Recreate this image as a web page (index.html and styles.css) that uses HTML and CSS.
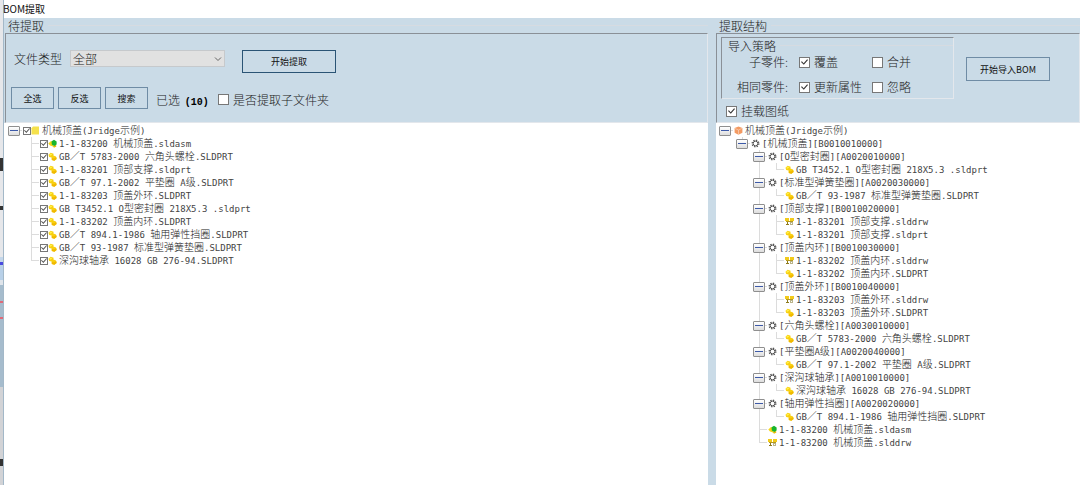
FILE: index.html
```html
<!DOCTYPE html>
<html lang="zh-CN">
<head>
	<meta charset="UTF-8">
	<title>BOM提取</title>
	<link rel="stylesheet" href="styles.css">
	<script src="tree.js"></script>
</head>
<body>
	<svg class="sprite" aria-hidden="true">
		<symbol id="part" viewBox="0 0 9 9">
			<path d="M.5 2.8 2.6.8 5.6 1.8 5.4 3.6 8 4.6 8.6 7 6.4 8.7 3.8 8 3.6 5.6 1.2 5z" fill="#f8cf10"/>
			<path d="M1 3 2.8 1.4 4.4 2.2 2.6 3.8z" fill="#fff04a"/>
			<path d="M3.8 6 6 6.6 8.2 5 8.6 7 6.4 8.7 3.8 8z" fill="#f0b800"/>
		</symbol>
		<symbol id="asm" viewBox="0 0 9 9">
			<path d="M.3 4.4 3 2 5 3 5 7.4 2 6.6z" fill="#f5d516"/>
			<path d="M4.6 6.8 8 6 8.4 7.6 6 8.8z" fill="#e8b800"/>
			<path d="M3.6 2.2 6 .8 8.6 2.4 8.6 5.6 6.2 7 3.8 5.4z" fill="#17b52c"/>
		</symbol>
		<symbol id="drw" viewBox="0 0 9 9">
			<path d="M0 1h4v3H0zM5 1h4v3H5z" fill="#f2cb1c"/>
			<path d="M1 4h7v1H1z" fill="#b59a20"/>
			<path d="M2 5h1v2H2zM1 7h3v1H1z" fill="#8d7a1e"/>
			<path d="M5 5h3v3H5z" fill="#b9b389"/>
			<path d="M6 6h1v1H6z" fill="#fff"/>
		</symbol>
		<symbol id="folder" viewBox="0 0 9 9">
			<path d="M.5 2.2 2 .6h6v7.8H.5z" fill="#f5e14c"/>
		</symbol>
		<symbol id="cube" viewBox="0 0 9 9">
			<path d="M4.5.4 8.4 2v4.8L4.5 8.8.6 6.8V2z" fill="#f39a62"/>
			<path d="M.8 2.4 4.5 4 8.2 2.4M4.5 4v4.6" fill="none" stroke="#fbd3b8" stroke-width=".7"/>
		</symbol>
		<symbol id="gear" viewBox="0 0 9 9">
			<circle cx="4.5" cy="4.5" r="3.2" fill="none" stroke="#555" stroke-width="1.6" stroke-dasharray="1.3 1.213"/>
			<circle cx="4.5" cy="4.5" r="2.3" fill="#fff" stroke="#555"/>
		</symbol>
	</svg>

	<div class="window">
		<div class="behind"></div>
		<h1 class="title">BOM提取</h1>
		<main class="main">
			<section class="group source">
				<h2 class="legend">待提取</h2>
				<div class="panel">
					<div class="row first">
						<label for="type">文件类型</label>
						<div class="combo">
							<select id="type"><option>全部</option></select>
							<svg viewBox="0 0 8 8"><path d="M1 2.5 4 5.5 7 2.5" fill="none" stroke="#666"/></svg>
						</div>
						<button class="btn primary">开始提取</button>
					</div>
					<div class="row second">
						<button class="btn small">全选</button>
						<button class="btn small">反选</button>
						<button class="btn small">搜索</button>
						<span class="count">已选 <b>(10)</b></span>
						<label class="check"><input type="checkbox">是否提取子文件夹</label>
					</div>
				</div>
				<ul class="tree" id="files"></ul>
			</section>

			<section class="group target">
				<h2 class="legend">提取结构</h2>
				<div class="panel">
					<div class="options">
						<div class="policy">
							<h3 class="legend">导入策略</h3>
							<div class="grid">
								<span class="name">子零件:</span>
								<label class="check"><input type="checkbox" checked>覆盖</label>
								<label class="check"><input type="checkbox">合并</label>
								<span class="name">相同零件:</span>
								<label class="check"><input type="checkbox" checked>更新属性</label>
								<label class="check"><input type="checkbox">忽略</label>
							</div>
						</div>
						<label class="check mount"><input type="checkbox" checked>挂载图纸</label>
					</div>
					<button class="btn import">开始导入BOM</button>
				</div>
				<ul class="tree" id="bom"></ul>
			</section>
		</main>
	</div>
</body>
</html>
```
FILE: styles.css
```css
*{box-sizing:border-box;}
body{margin:0;background:#fff;color:#222;font:12px/16px "Noto Sans CJK SC",sans-serif;font-weight:300;}
h1,h2,h3,ul{margin:0;padding:0;font-weight:300;list-style:none;}
.sprite{display:none;}

.window{display:grid;grid-template-columns:4px 1fr;grid-template-rows:18px 1fr;min-height:100vh;}
/* 窗口左侧露出的底层窗口 */
.behind{grid-row:1 / 3;border-right:1px solid #a3b8c8;background:linear-gradient(#e6e7ea 158px,#333 158px,#333 171px,#e6e7ea 171px,#e6e7ea 206px,#333 206px,#333 210px,#e6e7ea 210px,#e6e7ea 257px,#c3d6ea 257px,#c3d6ea 262px,#4a4ae0 262px,#4a4ae0 265px,#b8d0e8 265px,#b8d0e8 280px,#dfe4ea 280px,#dfe4ea 285px,#a6bccd 285px,#a6bccd 301px,#e06a78 301px,#e06a78 303px,#a6bccd 303px,#a6bccd 317px,#e06a78 317px,#e06a78 319px,#a6bccd 319px,#a6bccd 387px,#d2d3d6 387px,#d2d3d6 459px,#333 459px,#333 466px,#d2d3d6 466px);}
.title{margin-left:-1px;font-size:10px;line-height:18px;color:#111;font-weight:400;}
.main{display:grid;grid-template-columns:704px 1fr;gap:8px;background:#cadbe7;}

/* 分组框 */
.group{display:flex;flex-direction:column;min-width:0;}
.legend{display:flex;align-items:center;gap:4px;padding-left:4px;height:15px;font-size:12px;line-height:12px;}
.legend::after{content:"";flex:1;height:1px;background:#d6dbe1;}
.panel{height:90px;border:1px solid #8a9097;border-right-color:#e3e7ec;border-bottom-color:#e3e7ec;}
.source .panel{margin-left:1px;}
.row{display:flex;align-items:center;}
.first{padding:16px 0 0 8px;}
.first label{width:56px;margin-top:-6px;}
.second{padding:14px 0 0 5px;gap:4px;}
.second span,.second label{margin-top:3px;}

.combo{position:relative;width:155px;margin:-6px 17px 0 0;}
.combo select{display:block;appearance:none;width:100%;height:17px;padding:0 2px;border:1px solid #c6c9cc;border-radius:0;background:#e1e1e1;color:#222;font:inherit;line-height:15px;}
.combo svg{position:absolute;right:3px;top:5px;width:8px;height:8px;pointer-events:none;}

.btn{height:23px;padding:0;border:1px solid #6f8ca5;background:transparent;color:#111;font-family:inherit;font-size:9px;font-weight:400;}
.small{width:43px;height:22px;}
.primary{width:94px;border-color:#2a5475;}
.import{width:84px;height:24px;margin:23px 0 0 12px;}
.count{margin-left:4px;width:58px;}
.count b{margin-left:2px;font:bold 10px "Liberation Mono",monospace;color:#000;}

.check{display:flex;align-items:center;gap:4px;white-space:nowrap;}
input{position:relative;appearance:none;flex:none;margin:0;width:11px;height:11px;border:1px solid #777;background:#fff;}
input:checked::after{content:"";position:absolute;left:1px;top:1px;width:7px;height:7px;background:#333;clip-path:polygon(0 50%,12% 40%,38% 68%,88% 12%,100% 22%,40% 90%);}

/* 导入选项 */
.target .legend{padding-left:3px;}
.target .panel{display:flex;align-items:flex-start;}
.options{padding:3px 0 0 4px;}
.policy{width:233px;height:62px;border:1px solid #8a9097;border-right-color:#e3e7ec;border-bottom-color:#e3e7ec;}
.target .policy .legend{padding-left:6px;}
.grid{display:grid;grid-template-columns:70px 73px 1fr;row-gap:9px;padding-top:1px;}
.name{padding-right:4px;text-align:right;}
.grid .check{padding-left:7px;}
.mount{margin:4px 0 0 5px;}

/* 树 */
.tree{flex:1;padding:1px 0 0 4px;background:#fff;color:#444;font:9px/13px "DejaVu Sans Mono","Noto Sans CJK SC",monospace;}
#bom{padding-left:3px;}
.tree i{color:#222;font:300 10px/13px "Noto Sans CJK SC",sans-serif;}
.tree ul{padding-left:17px;}
.tree li{position:relative;}
.tree ul li::before{content:"";position:absolute;left:6px;top:0;bottom:0;width:1px;background:#dcdcdc;}
.tree ul li:last-child::before{bottom:auto;height:7px;}
.node{display:flex;align-items:center;height:13px;white-space:pre;}
.node svg{flex:none;width:9px;height:9px;margin-right:2px;}
.node input{width:8px;height:8px;}
.node input:checked::after{left:0;top:0;width:6px;height:6px;background:#555;}
.slot{position:relative;flex:none;width:12px;height:13px;margin-right:3px;}
.slot::after{content:"";position:absolute;left:6px;right:-2px;top:6px;height:1px;background:#dcdcdc;}
.slot button{position:absolute;z-index:1;left:0;top:2px;width:12px;height:10px;padding:0;border:1px solid #8f8f8f;border-radius:1px;background:linear-gradient(#fff,#ddd);}
.slot button::after{content:"";position:absolute;left:1px;right:1px;top:3px;height:1px;background:#3d5aa8;}
```
FILE: tree.js
```js
var files = [
	{icon:'folder', name:'机械顶盖(Jridge示例)', children:[
		{icon:'asm', name:'1-1-83200 机械顶盖.sldasm'},
		{icon:'part', name:'GB／T 5783-2000 六角头螺栓.SLDPRT'},
		{icon:'part', name:'1-1-83201 顶部支撑.sldprt'},
		{icon:'part', name:'GB／T 97.1-2002 平垫圈 A级.SLDPRT'},
		{icon:'part', name:'1-1-83203 顶盖外环.SLDPRT'},
		{icon:'part', name:'GB T3452.1 O型密封圈 218X5.3 .sldprt'},
		{icon:'part', name:'1-1-83202 顶盖内环.SLDPRT'},
		{icon:'part', name:'GB／T 894.1-1986 轴用弹性挡圈.SLDPRT'},
		{icon:'part', name:'GB／T 93-1987 标准型弹簧垫圈.SLDPRT'},
		{icon:'part', name:'深沟球轴承 16028 GB 276-94.SLDPRT'}
	]}
];

var bom = [
	{icon:'cube', name:'机械顶盖(Jridge示例)', children:[
		{icon:'gear', name:'[机械顶盖][B0010010000]', children:[
			{icon:'gear', name:'[O型密封圈][A0020010000]', children:[
				{icon:'part', name:'GB T3452.1 O型密封圈 218X5.3 .sldprt'}
			]},
			{icon:'gear', name:'[标准型弹簧垫圈][A0020030000]', children:[
				{icon:'part', name:'GB／T 93-1987 标准型弹簧垫圈.SLDPRT'}
			]},
			{icon:'gear', name:'[顶部支撑][B0010020000]', children:[
				{icon:'drw', name:'1-1-83201 顶部支撑.slddrw'},
				{icon:'part', name:'1-1-83201 顶部支撑.sldprt'}
			]},
			{icon:'gear', name:'[顶盖内环][B0010030000]', children:[
				{icon:'drw', name:'1-1-83202 顶盖内环.slddrw'},
				{icon:'part', name:'1-1-83202 顶盖内环.SLDPRT'}
			]},
			{icon:'gear', name:'[顶盖外环][B0010040000]', children:[
				{icon:'drw', name:'1-1-83203 顶盖外环.slddrw'},
				{icon:'part', name:'1-1-83203 顶盖外环.SLDPRT'}
			]},
			{icon:'gear', name:'[六角头螺栓][A0030010000]', children:[
				{icon:'part', name:'GB／T 5783-2000 六角头螺栓.SLDPRT'}
			]},
			{icon:'gear', name:'[平垫圈A级][A0020040000]', children:[
				{icon:'part', name:'GB／T 97.1-2002 平垫圈 A级.SLDPRT'}
			]},
			{icon:'gear', name:'[深沟球轴承][A0010010000]', children:[
				{icon:'part', name:'深沟球轴承 16028 GB 276-94.SLDPRT'}
			]},
			{icon:'gear', name:'[轴用弹性挡圈][A0020020000]', children:[
				{icon:'part', name:'GB／T 894.1-1986 轴用弹性挡圈.SLDPRT'}
			]},
			{icon:'asm', name:'1-1-83200 机械顶盖.sldasm'},
			{icon:'drw', name:'1-1-83200 机械顶盖.slddrw'}
		]}
	]}
];

document.addEventListener('DOMContentLoaded',function(){
	document.querySelector('#files').innerHTML = render(files,true);
	document.querySelector('#bom').innerHTML = render(bom,false);

	// 展开/收起
	document.querySelector('.main').onclick = function(e){
		var btn = e.target;
		if(btn.parentNode.className === 'slot'){
			var ul = btn.closest('li').querySelector('ul');
			ul.hidden = !ul.hidden;
		}
	}

	function render(list,checkable){
		return list.map(function(item){
			// 中文部分单独设置字号
			var text = item.name.replace(/[\u4e00-\u9fff\uff0f]+/g,'<i>$&</i>');
			var html = '<span class="slot">' + (item.children ? '<button aria-label="展开或收起"></button>' : '') + '</span>';

			if(checkable){
				html += '<input type="checkbox" checked>';
			}
			html += '<svg><use href="#' + item.icon + '"/></svg><span>' + text + '</span>';

			// 可勾选的节点用label关联
			html = '<' + (checkable ? 'label' : 'div') + ' class="node">' + html + '</' + (checkable ? 'label' : 'div') + '>';

			if(item.children){
				html += '<ul>' + render(item.children,checkable) + '</ul>';
			}
			return '<li>' + html + '</li>';
		}).join('');
	}
})
```
